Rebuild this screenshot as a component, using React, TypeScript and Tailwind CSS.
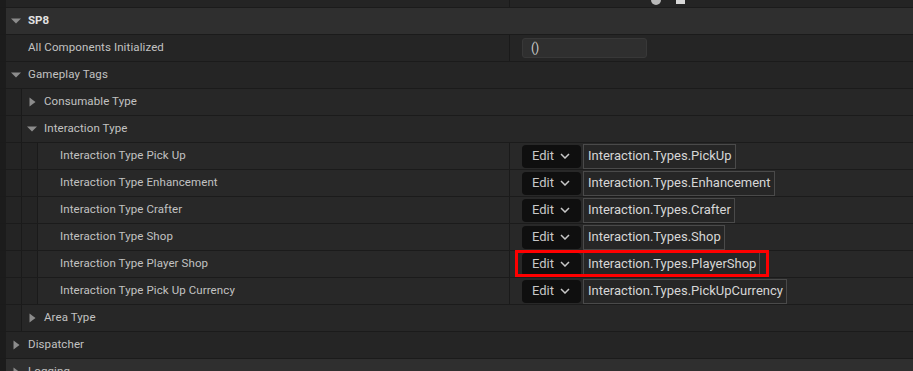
import React from 'react'

type RowProps = {
  depth: number
  label: string
  arrow?: 'down' | 'right'
  header?: boolean
  bold?: boolean
  children?: React.ReactNode
  divider?: boolean
}

function Arrow({ dir }: { dir: 'down' | 'right' }) {
  if (dir === 'down') {
    return (
      <svg width="10" height="6" viewBox="0 0 10 6" className="ml-[5px]">
        <path d="M0 0.5 L10 0.5 L5 5.5 Z" fill="#8c8c8c" />
      </svg>
    )
  }
  return (
    <svg width="7" height="10" viewBox="0 0 7 10" className="ml-[7px]">
      <path d="M0.5 0.5 L6.5 5 L0.5 9.5 Z" fill="#8c8c8c" />
    </svg>
  )
}

function Row({ depth, label, arrow, header, bold, children, divider }: RowProps) {
  const bg = header ? 'bg-[#2f2f2f]' : depth >= 2 ? 'bg-[#282828]' : depth === 1 ? 'bg-[#272727]' : 'bg-[#252525]'
  return (
    <div className="flex h-[27px] border-b border-[#1b1b1b]">
      <div className="flex w-[509px] shrink-0">
        <div className="w-[6px] shrink-0 bg-[#1c1c1c]" />
        {Array.from({ length: depth }).map((_, i) => (
          <div key={i} className="w-[16px] shrink-0 border-r border-[#1a1a1a] bg-[#242424]" />
        ))}
        <div className={`flex flex-1 items-center ${bg}`}>
          <div className="flex w-[22px] shrink-0 items-center">{arrow && <Arrow dir={arrow} />}</div>
          <span className={bold ? 'font-bold text-[11.5px] text-[#e2e2e2]' : 'text-[11.5px] tracking-[0.1px] text-[#c2c2c2]'}>{label}</span>
        </div>
      </div>
      <div className={`relative flex flex-1 items-center ${divider ? 'border-l border-[#1a1a1a]' : ''} ${bg}`}>
        {children}
      </div>
    </div>
  )
}

function TagValue({ tag, highlight }: { tag: string; highlight?: boolean }) {
  return (
    <div className="flex h-full items-center pl-[12px]">
      <div className="flex h-[23px] w-[59px] items-center gap-[6px] rounded-[4px] bg-[#0f0f0f] pl-[10px] text-[13px] text-[#c8c8c8]">
        <span>Edit</span>
        <svg width="10" height="6" viewBox="0 0 10 6">
          <path d="M1 1 L5 5 L9 1" fill="none" stroke="#c8c8c8" strokeWidth="1.5" />
        </svg>
      </div>
      <div className="ml-[2px] flex h-[25px] items-center border border-[#4a4a4a] bg-[#262626] pl-[4px] pr-[3px] text-[13px] text-[#d6d6d6]">
        {tag}
      </div>
      {highlight && (
        <div className="absolute left-[5px] top-[-1px] h-[27px] w-[254px] border-[3px] border-[#ff0000]" />
      )}
    </div>
  )
}

export default function App() {
  return (
    <div className="h-[371px] w-full overflow-hidden bg-[#242424]" style={{ fontFamily: 'Roboto, "Noto Sans", sans-serif' }}>
      <div className="flex h-[8px] border-b border-[#1b1b1b]">
        <div className="w-[6px] bg-[#1c1c1c]" />
        <div className="w-[503px] bg-[#242424]" />
        <div className="relative flex-1 border-l border-[#1a1a1a] bg-[#242424]">
          <svg width="10" height="5" className="absolute left-[141px] top-0">
            <path d="M0 0 A5 5 0 0 0 10 0 Z" fill="#b8b8b8" />
          </svg>
          <div className="absolute left-[166px] top-0 h-[4px] w-[9px] bg-[#d8d8d8]" />
        </div>
      </div>

      <Row depth={0} label="SP8" arrow="down" header bold />
      <Row depth={0} label="All Components Initialized" divider>
        <div className="ml-[12px] flex h-[20px] w-[125px] items-center rounded-[3px] border border-[#383838] bg-[#2f2f2f] pl-[8px] text-[12px] text-[#cfcfcf]">
          ()
        </div>
      </Row>
      <Row depth={0} label="Gameplay Tags" arrow="down" />
      <Row depth={1} label="Consumable Type" arrow="right" />
      <Row depth={1} label="Interaction Type" arrow="down" />
      <Row depth={2} label="Interaction Type Pick Up" divider>
        <TagValue tag="Interaction.Types.PickUp" />
      </Row>
      <Row depth={2} label="Interaction Type Enhancement" divider>
        <TagValue tag="Interaction.Types.Enhancement" />
      </Row>
      <Row depth={2} label="Interaction Type Crafter" divider>
        <TagValue tag="Interaction.Types.Crafter" />
      </Row>
      <Row depth={2} label="Interaction Type Shop" divider>
        <TagValue tag="Interaction.Types.Shop" />
      </Row>
      <Row depth={2} label="Interaction Type Player Shop" divider>
        <TagValue tag="Interaction.Types.PlayerShop" highlight />
      </Row>
      <Row depth={2} label="Interaction Type Pick Up Currency" divider>
        <TagValue tag="Interaction.Types.PickUpCurrency" />
      </Row>
      <Row depth={1} label="Area Type" arrow="right" />
      <Row depth={0} label="Dispatcher" arrow="right" />
      <Row depth={0} label="Logging" arrow="right" header />
    </div>
  )
}
